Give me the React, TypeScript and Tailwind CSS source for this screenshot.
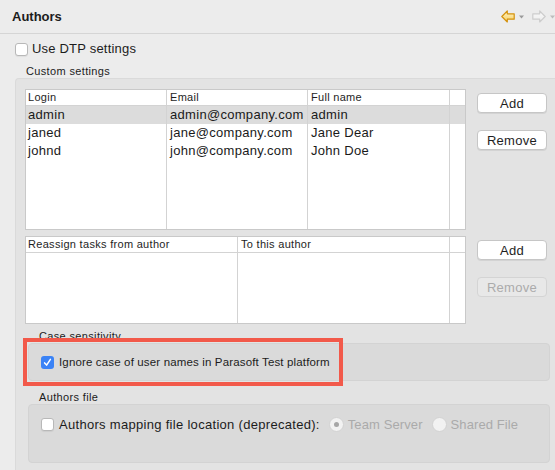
import React from 'react';

type Col = { title: string; w: string; pl?: string };

function Check({ checked = false }: { checked?: boolean }) {
  if (checked) {
    return (
      <span className="flex h-[13px] w-[13px] shrink-0 items-center justify-center rounded-[3px] bg-[#3b83f6]">
        <svg width="9" height="9" viewBox="0 0 9 9">
          <path d="M1.6 4.9 L3.6 7.1 L7.4 1.4" fill="none" stroke="#fff" strokeWidth="1.5" strokeLinecap="round" strokeLinejoin="round" />
        </svg>
      </span>
    );
  }
  return <span className="h-[13px] w-[13px] shrink-0 rounded-[3px] border border-[#b8b8b8] bg-white shadow-[0_1px_1px_rgba(0,0,0,0.06)]" />;
}

function Radio({ dot = false }: { dot?: boolean }) {
  return (
    <span className="flex h-[15px] w-[15px] shrink-0 items-center justify-center rounded-full border border-[#d2d2d2] bg-[#f2f2f2]">
      {dot && <span className="h-[5px] w-[5px] rounded-full bg-[#a6a6a6]" />}
    </span>
  );
}

function Btn({ label, disabled = false }: { label: string; disabled?: boolean }) {
  return (
    <div
      className={`flex h-[20px] w-[70px] items-center justify-center rounded-[4px] border text-[13px] leading-none tracking-[0.3px] ${
        disabled
          ? 'border-[#d4d4d4] bg-[#e8e8e8] text-[#ababab]'
          : 'border-[#c6c6c6] bg-white text-[#1e1e1e] shadow-[0_1px_0_rgba(0,0,0,0.07)]'
      }`}
    >
      {label}
    </div>
  );
}

function Table({ cols, rows, height }: { cols: Col[]; rows: string[][]; height: string }) {
  return (
    <div className={`flex w-[441px] ${height} shrink-0 border border-[#c9c9c9] bg-white`}>
      {cols.map((c, ci) => (
        <div key={ci} className={`flex flex-col ${c.w} ${ci < cols.length - 1 ? 'border-r border-[#d3d3d3]' : ''}`}>
          <div className={`h-[16px] shrink-0 border-b border-[#d3d3d3] ${c.pl ?? 'pl-[3px]'} text-[11px] leading-[15px] tracking-[0.3px] text-[#1e1e1e]`}>
            {c.title}
          </div>
          {rows.map((r, ri) => (
            <div
              key={ri}
              className={`h-[18px] shrink-0 ${c.pl ?? 'pl-[3px]'} text-[13px] leading-[18px] tracking-[0.3px] text-[#1a1a1a] ${ri === 0 ? 'bg-[#dcdcdc]' : ''}`}
            >
              {r[ci] ?? ''}
            </div>
          ))}
        </div>
      ))}
    </div>
  );
}

function NavArrow({ active }: { active: boolean }) {
  return (
    <div className="flex items-center gap-[4px]">
      <svg width="14" height="13" viewBox="0 0 14 13" className={active ? '' : 'scale-x-[-1]'}>
        <defs>
          <linearGradient id={active ? 'ga' : 'gb'} x1="0" y1="0" x2="0" y2="1">
            <stop offset="0" stopColor={active ? '#fff4c8' : '#fafafa'} />
            <stop offset="1" stopColor={active ? '#f7cf5e' : '#ececec'} />
          </linearGradient>
        </defs>
        <path
          d="M0.8 6.5 L6.3 1 L6.3 3.8 L13.2 3.8 L13.2 9.2 L6.3 9.2 L6.3 12 Z"
          fill={`url(#${active ? 'ga' : 'gb'})`}
          stroke={active ? '#d4920f' : '#cdcdcd'}
          strokeWidth="1.2"
          strokeLinejoin="round"
        />
      </svg>
      <svg width="5" height="4" viewBox="0 0 5 4">
        <path d="M0 0.5 L5 0.5 L2.5 3.5 Z" fill={active ? '#9a9a9a' : '#bcbcbc'} />
      </svg>
    </div>
  );
}

export default function App() {
  const users = [
    ['admin', 'admin@company.com', 'admin'],
    ['janed', 'jane@company.com', 'Jane Dear'],
    ['johnd', 'john@company.com', 'John Doe'],
  ];

  return (
    <div className="flex h-[470px] w-[555px] flex-col overflow-hidden bg-[#ececec] font-['Liberation_Sans',Arial,sans-serif] text-[#1c1c1c]">
      {/* title bar */}
      <div className="flex h-[34px] shrink-0 items-center justify-between border-b border-[#d5d5d5] pl-[12px]">
        <span className="text-[13px] font-bold">Authors</span>
        <div className="flex items-center gap-[8px] pr-[0px]">
          <NavArrow active />
          <NavArrow active={false} />
        </div>
      </div>

      <div className="mt-[8px] flex h-[14px] items-center gap-[4px] pl-[15px]">
        <Check />
        <span className="text-[13px] leading-[14px] tracking-[0.2px]">Use DTP settings</span>
      </div>

      <div className="mt-[9px] h-[13px] pl-[26px] text-[11px] leading-[13px] tracking-[0.35px]">Custom settings</div>

      {/* custom settings panel */}
      <div className="ml-[15px] flex flex-1 flex-col rounded-tl-[4px] border-l border-t border-[#dadada] bg-[#e3e3e3] pl-[9px] pt-[10px]">
        <div className="flex">
          <Table
            height="h-[141px]"
            cols={[
              { title: 'Login', w: 'w-[141px]', pl: 'pl-[2px]' },
              { title: 'Email', w: 'w-[141px]' },
              { title: 'Full name', w: 'w-[142px]' },
              { title: '', w: 'w-[15px]' },
            ]}
            rows={users}
          />
          <div className="ml-[11px] flex flex-col gap-[17px] pt-[4px]">
            <Btn label="Add" />
            <Btn label="Remove" />
          </div>
        </div>

        <div className="mt-[6px] flex">
          <Table
            height="h-[88px]"
            cols={[
              { title: 'Reassign tasks from author', w: 'w-[212px]', pl: 'pl-[2px]' },
              { title: 'To this author', w: 'w-[212px]' },
              { title: '', w: 'w-[15px]' },
            ]}
            rows={[]}
          />
          <div className="ml-[11px] flex flex-col gap-[17px] pt-[4px]">
            <Btn label="Add" />
            <Btn label="Remove" disabled />
          </div>
        </div>

        <div className="mt-[6px] h-[13px] pl-[14px] text-[11px] leading-[13px] tracking-[0.35px]">Case sensitivity</div>

        <div className="relative ml-[3px]">
          <div className="flex h-[38px] w-[522px] items-center gap-[5px] rounded-[4px] border border-[#d3d3d3] bg-[#dadada] pl-[12px]">
            <Check checked />
            <span className="text-[11.5px] leading-[13px] tracking-[0.15px]">Ignore case of user names in Parasoft Test platform</span>
          </div>
          <div className="pointer-events-none absolute left-[-5px] top-[-5px] h-[48px] w-[320px] border-[4px] border-[#f2594a]" />
        </div>

        <div className="mt-[10px] h-[13px] pl-[14px] text-[11px] leading-[13px] tracking-[0.35px]">Authors file</div>

        <div className="ml-[3px] flex h-[59px] w-[522px] items-start rounded-[4px] border border-[#d3d3d3] bg-[#dadada] pl-[12px] pt-[13px]">
          <div className="flex h-[13px] items-center">
            <Check />
            <span className="ml-[5px] text-[13px] leading-[14px] tracking-[0.3px]">Authors mapping file location (deprecated):</span>
            <span className="ml-[9px] flex items-center gap-[4px]">
              <Radio dot />
              <span className="text-[13px] tracking-[0.1px] text-[#aaaaaa]">Team Server</span>
            </span>
            <span className="ml-[9px] flex items-center gap-[4px]">
              <Radio />
              <span className="text-[13px] tracking-[0.1px] text-[#aaaaaa]">Shared File</span>
            </span>
          </div>
        </div>
      </div>
    </div>
  );
}
